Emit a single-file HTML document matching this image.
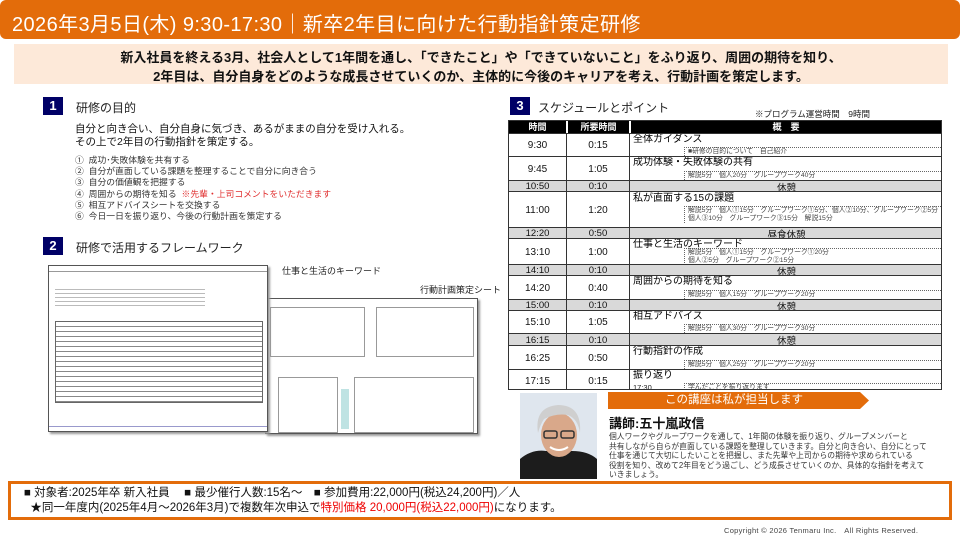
<!DOCTYPE html>
<html><head><meta charset="utf-8">
<style>
*{margin:0;padding:0;box-sizing:border-box}
body{width:960px;height:540px;position:relative;background:#fff;font-family:"Liberation Sans","Noto Sans CJK JP",sans-serif;color:#222;overflow:hidden}
.a{position:absolute;white-space:nowrap}
.badge{position:absolute;width:20px;height:18px;background:#000066;color:#fff;font-size:13px;font-weight:bold;text-align:center;line-height:18px}
.h{font-size:12px;color:#222}
#tb{position:absolute;left:508px;top:120px;width:434px;height:270px;border:1.5px solid #333;overflow:hidden}
.r{position:absolute;left:0;width:434px;border-top:1.5px solid #333;overflow:hidden}
.r .c1,.r .c2,.r .c3{position:absolute;top:0;bottom:0;display:flex;align-items:center;justify-content:center;font-size:10px;color:#111}
.c1{left:0;width:58px;border-right:1.5px solid #333}
.c2{left:58px;width:63px;border-right:1.5px solid #333}
.c3{left:121px;right:0}
.br{background:#d9d9d9}
.br .c1,.br .c2,.br .c3{font-size:9.5px}
.ct{position:absolute;left:124px;top:0;font-size:10px;line-height:11px;color:#000}
.sb{position:absolute;left:175px;right:0;bottom:1px;border-top:1px dotted #666;border-left:1px dotted #666;font-size:6.8px;color:#444;padding-left:3px;line-height:8px}
.hd{position:absolute;top:0;height:13px;background:#000;color:#fff;font-size:9px;font-weight:bold;text-align:center;line-height:13px}
.doc{position:absolute;background:#fff;border:1px solid #555;box-shadow:2px 2px 2px #999}
</style></head><body>
<div class="a" style="left:0;top:0;width:960px;height:39px;background:#E36C0A;border-radius:6px"></div>
<div class="a" style="left:12px;top:8px;font-size:20px;color:#fff;letter-spacing:0.4px">2026年3月5日(木) 9:30-17:30｜新卒2年目に向けた行動指針策定研修</div>
<div class="a" style="left:14px;top:44px;width:934px;height:40px;background:#FDE9D9"></div>
<div class="a" style="left:14px;top:48px;width:934px;text-align:center;font-size:13px;font-weight:bold;line-height:19px;color:#111">新入社員を終える3月、社会人として1年間を通し、「できたこと」や「できていないこと」をふり返り、周囲の期待を知り、<br>2年目は、自分自身をどのような成長させていくのか、主体的に今後のキャリアを考え、行動計画を策定します。</div>

<div class="badge" style="left:43px;top:97px">1</div>
<div class="a h" style="left:76px;top:99px">研修の目的</div>
<div class="a" style="left:75px;top:123px;font-size:10.5px;line-height:13px;color:#111">自分と向き合い、自分自身に気づき、あるがままの自分を受け入れる。<br>その上で2年目の行動指針を策定する。</div>
<div class="a" style="left:75px;top:155px;font-size:8.8px;line-height:11.2px;color:#333">①&nbsp; 成功･失敗体験を共有する<br>②&nbsp; 自分が直面している課題を整理することで自分に向き合う<br>③&nbsp; 自分の価値観を把握する<br>④&nbsp; 周囲からの期待を知る&nbsp; <span style="color:#e03030">※先輩・上司コメントをいただきます</span><br>⑤&nbsp; 相互アドバイスシートを交換する<br>⑥&nbsp; 今日一日を振り返り、今後の行動計画を策定する</div>

<div class="badge" style="left:43px;top:237px">2</div>
<div class="a h" style="left:76px;top:239px">研修で活用するフレームワーク</div>
<div class="a" style="left:282px;top:264px;font-size:9px">仕事と生活のキーワード</div>
<div class="a" style="left:420px;top:283px;font-size:9px">行動計画策定シート</div>
<div class="doc" style="left:265px;top:298px;width:213px;height:136px">
 <div style="position:absolute;left:4px;top:8px;width:95px;height:50px;border:1px solid #999"></div>
 <div style="position:absolute;left:110px;top:8px;width:98px;height:50px;border:1px solid #999"></div>
 <div style="position:absolute;left:12px;top:78px;width:60px;height:56px;border:1px solid #999"></div>
 <div style="position:absolute;left:88px;top:78px;width:120px;height:56px;border:1px solid #999"></div>
 <div style="position:absolute;left:75px;top:90px;width:8px;height:40px;background:#bfe3e3"></div>
</div>
<div class="doc" style="left:48px;top:265px;width:220px;height:167px">
 <div style="position:absolute;left:0;top:0;width:100%;height:6px;border-bottom:1px solid #999"></div>
 <div style="position:absolute;left:6px;top:55px;width:208px;height:82px;background:repeating-linear-gradient(#fff 0,#fff 4px,#888 4px,#888 5px),#fff;border:1px solid #666"></div>
 <div style="position:absolute;left:6px;top:20px;width:150px;height:22px;background:repeating-linear-gradient(#fff 0,#fff 3px,#bbb 3px,#bbb 4px)"></div>
 <div style="position:absolute;left:0;bottom:0;width:100%;height:5px;border-top:1px solid #99c"></div>
</div>

<div class="badge" style="left:510px;top:97px">3</div>
<div class="a h" style="left:538px;top:99px">スケジュールとポイント</div>
<div class="a" style="left:755px;top:108px;font-size:8.5px">※プログラム運営時間　9時間</div>

<div id="tb">
<div class="hd" style="left:0;width:57px">時間</div>
<div class="hd" style="left:59px;width:61px">所要時間</div>
<div class="hd" style="left:122px;right:0">概　要</div>
<div class="r" style="top:12px;height:24px"><div class="c1">9:30</div><div class="c2">0:15</div><div class="ct">全体ガイダンス</div><div class="sb">■研修の目的について　自己紹介</div></div>
<div class="r" style="top:35px;height:25px"><div class="c1">9:45</div><div class="c2">1:05</div><div class="ct">成功体験・失敗体験の共有</div><div class="sb">解説5分　個人20分　グループワーク40分</div></div>
<div class="r br" style="top:59px;height:12px"><div class="c1">10:50</div><div class="c2">0:10</div><div class="c3">休憩</div></div>
<div class="r" style="top:70px;height:37px"><div class="c1">11:00</div><div class="c2">1:20</div><div class="ct" style="top:1px">私が直面する15の課題</div><div class="sb" style="bottom:5px">解説5分　個人①15分　グループワーク①5分、個人②10分、グループワーク②5分<br>個人③10分　グループワーク③15分　解説15分</div></div>
<div class="r br" style="top:106px;height:12px"><div class="c1">12:20</div><div class="c2">0:50</div><div class="c3">昼食休憩</div></div>
<div class="r" style="top:117px;height:27px"><div class="c1">13:10</div><div class="c2">1:00</div><div class="ct">仕事と生活のキーワード</div><div class="sb" style="bottom:0">解説5分　個人①15分　グループワーク①20分<br>個人②5分　グループワーク②15分</div></div>
<div class="r br" style="top:143px;height:12px"><div class="c1">14:10</div><div class="c2">0:10</div><div class="c3">休憩</div></div>
<div class="r" style="top:154px;height:25px"><div class="c1">14:20</div><div class="c2">0:40</div><div class="ct">周囲からの期待を知る</div><div class="sb">解説5分　個人15分　グループワーク20分</div></div>
<div class="r br" style="top:178px;height:12px"><div class="c1">15:00</div><div class="c2">0:10</div><div class="c3">休憩</div></div>
<div class="r" style="top:189px;height:24px"><div class="c1">15:10</div><div class="c2">1:05</div><div class="ct">相互アドバイス</div><div class="sb">解説5分　個人30分　グループワーク30分</div></div>
<div class="r br" style="top:212px;height:13px"><div class="c1">16:15</div><div class="c2">0:10</div><div class="c3">休憩</div></div>
<div class="r" style="top:224px;height:25px"><div class="c1">16:25</div><div class="c2">0:50</div><div class="ct">行動指針の作成</div><div class="sb">解説5分　個人25分　グループワーク20分</div></div>
<div class="r" style="top:248px;height:24px"><div class="c1">17:15</div><div class="c2">0:15</div><div class="ct">振り返り</div><div style="position:absolute;left:124px;bottom:1px;font-size:7.5px;line-height:8px">17:30</div><div class="sb" style="bottom:1px">学んだことを振り返ります</div></div>
</div>

<svg class="a" style="left:520px;top:393px" width="77" height="86" viewBox="0 0 77 86">
<rect width="77" height="86" fill="#dfe6ee"/>
<path d="M0 86 L0 66 Q12 56 26 58 L52 58 Q68 58 77 66 L77 86Z" fill="#1c1c1c"/>
<ellipse cx="39" cy="42" rx="18" ry="22" fill="#d9a88a"/>
<path d="M18 40 Q14 14 38 12 Q62 12 60 40 Q58 26 48 22 Q36 20 24 26 Q20 32 18 40Z" fill="#cfcfcf"/>
<rect x="24" y="38" width="13" height="7" rx="2" fill="none" stroke="#333" stroke-width="1.5"/>
<rect x="41" y="38" width="13" height="7" rx="2" fill="none" stroke="#333" stroke-width="1.5"/>
<path d="M30 54 Q39 60 48 54" stroke="#fff" stroke-width="2" fill="none"/>
</svg>
<svg class="a" style="left:608px;top:392px" width="262" height="17"><polygon points="0,0 252,0 261,8.5 252,17 0,17" fill="#E36C0A"/></svg>
<div class="a" style="left:608px;top:393px;width:252px;text-align:center;color:#fff;font-size:11.5px;line-height:15px">この講座は私が担当します</div>
<div class="a" style="left:609px;top:413px;font-size:13px;font-weight:bold;color:#111">講師:五十嵐政信</div>
<div class="a" style="left:609px;top:432px;font-size:7.8px;line-height:9.6px;color:#333">個人ワークやグループワークを通して、1年間の体験を振り返り、グループメンバーと<br>共有しながら自らが直面している課題を整理していきます。自分と向き合い、自分にとって<br>仕事を通じて大切にしたいことを把握し、また先輩や上司からの期待や求められている<br>役割を知り、改めて2年目をどう過ごし、どう成長させていくのか、具体的な指針を考えて<br>いきましょう。</div>

<div class="a" style="left:8px;top:481px;width:944px;height:39px;border:3px solid #E36C0A"></div>
<div class="a" style="left:24px;top:486px;font-size:11.5px;line-height:15px;color:#111">■ 対象者:2025年卒 新入社員　 ■ 最少催行人数:15名～　■ 参加費用:22,000円(税込24,200円)／人<br>&nbsp;&nbsp;★同一年度内(2025年4月～2026年3月)で複数年次申込で<span style="color:#e00">特別価格 20,000円(税込22,000円)</span>になります。</div>
<div class="a" style="left:724px;top:525px;font-size:7.5px;letter-spacing:0.3px;color:#444">Copyright © 2026 Tenmaru Inc.　All Rights Reserved.</div>
</body></html>
